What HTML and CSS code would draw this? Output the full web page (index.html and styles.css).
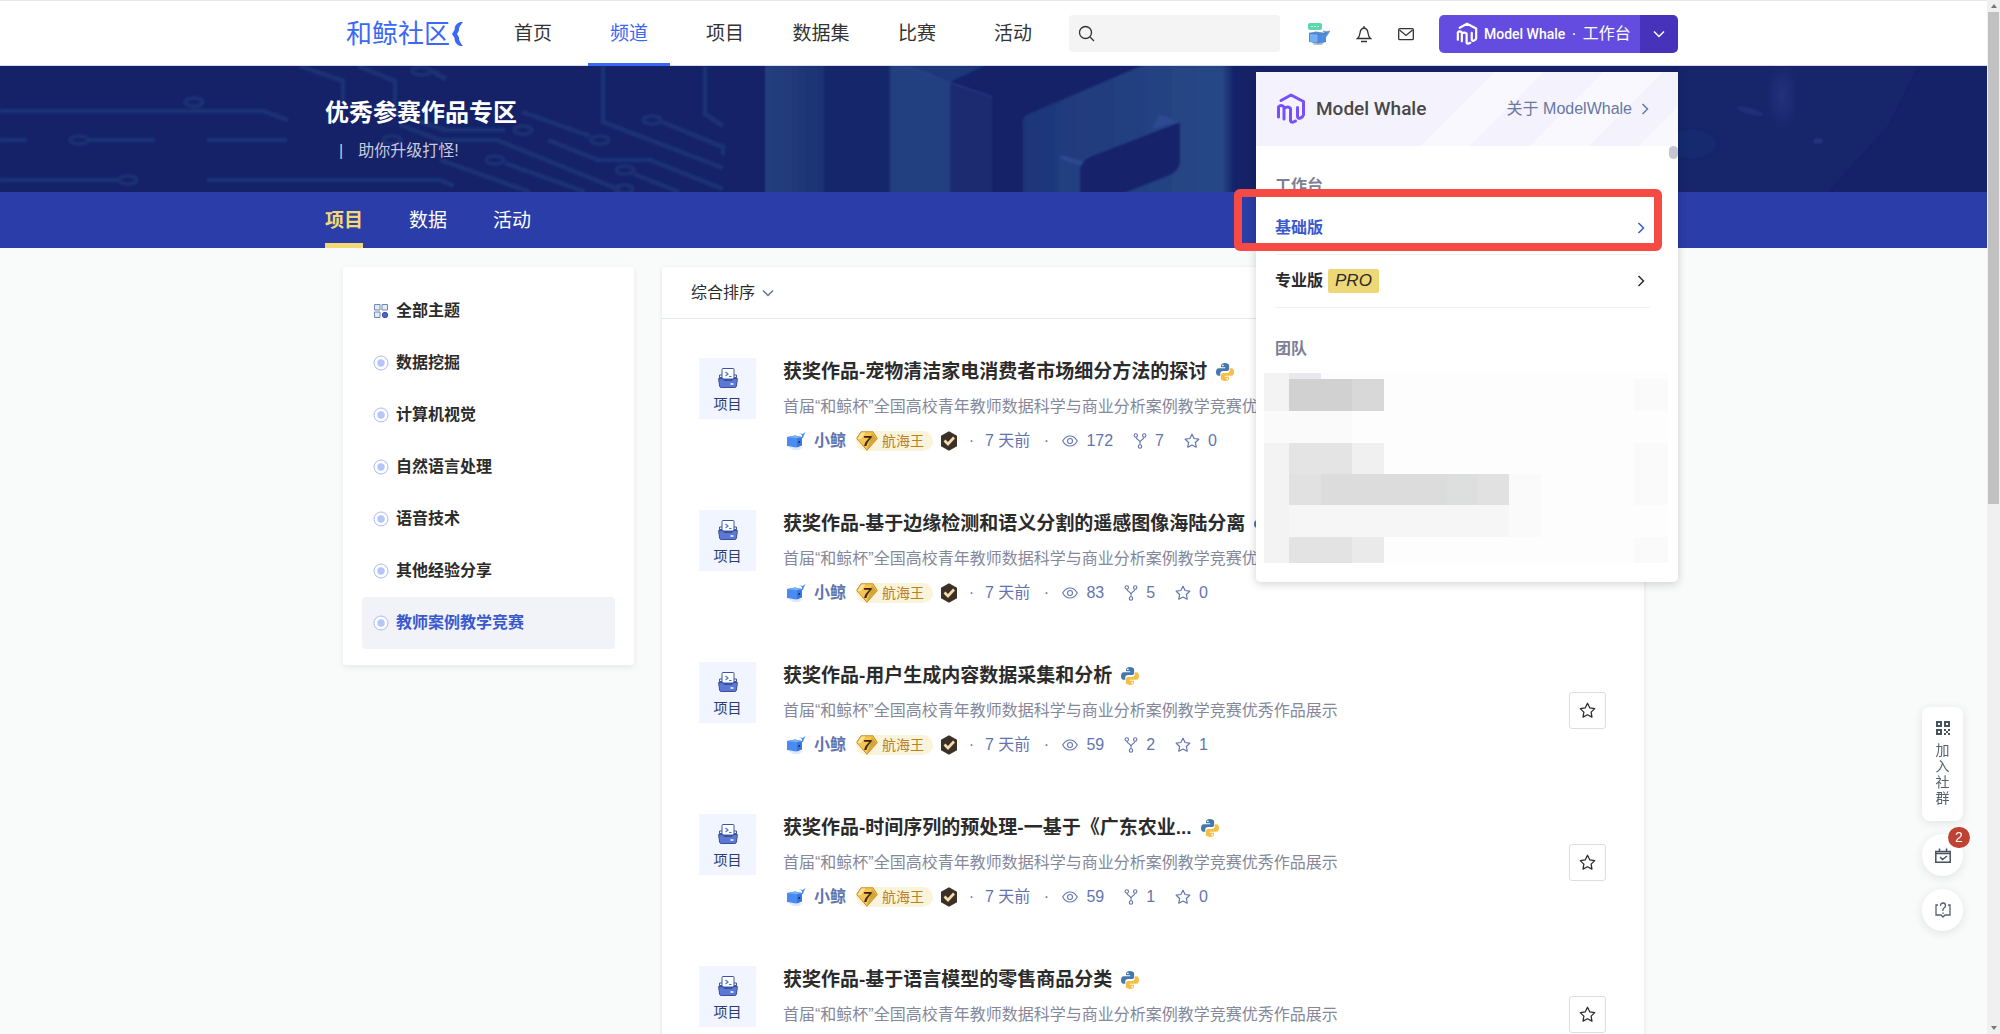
FILE: index.html
```html
<!DOCTYPE html>
<html lang="zh-CN">
<head>
<meta charset="utf-8">
<meta name="viewport" content="width=device-width, initial-scale=1">
<title>优秀参赛作品专区 - 和鲸社区</title>
<link rel="stylesheet" href="styles.css">
</head>
<body>
<svg class="sprite" aria-hidden="true">
  <symbol id="python" viewBox="0 0 20 20">
    <path fill="#4478ae" d="M9.800 0C6.900 0 5.600 1 5.600 2.800v2h4.600v.9H3.100C1.100 5.700 0 7.300 0 10s1.100 4.300 2.900 4.300h1.800v-2.300c0-1.700 1.300-3 3-3h4.300c1.500 0 2.600-1.200 2.600-2.700V2.800C14.600 1 12.800 0 9.800 0zM7.600 1.600a.9.9 0 1 1 0 1.900.9.9 0 0 1 0-1.900z"/>
    <path fill="#f5be45" d="M10.200 20c2.900 0 4.200-1 4.200-2.800v-2H9.800v-.9h7.100c2 0 3.100-1.600 3.100-4.300s-1.100-4.300-2.900-4.300h-1.800V8c0 1.700-1.300 3-3 3H8c-1.500 0-2.600 1.200-2.600 2.700v3.500C5.400 19 7.200 20 10.200 20zm2.200-1.600a.9.9 0 1 1 0-1.900.9.9 0 0 1 0 1.900z"/>
  </symbol>
  <symbol id="project" viewBox="0 0 20 20">
    <path fill="#3f57ab" d="M1 9h18l-1.500 10h-15z"/><path fill="none" stroke="#3f5598" d="M1.500 9V7H4M18.500 9V7H16"/>
    <path fill="#fff" stroke="#3f5598" d="M4 11V1.500Q4 .5 5 .5h10q1 0 1 1V11z"/>
    <path fill="#5b78d6" stroke="#3b4d96" d="M.6 10.500h4l1.500 2h7.800l1.500-2h4l-1 7.500q-.2 1.500-1.600 1.500H3.200q-1.400 0-1.600-1.500z"/>
    <path fill="none" stroke="#4b6fe0" stroke-width="1.200" d="M7.500 4l2.500 2-2.500 2M11 8.500h2.500"/><path stroke="#fff" stroke-width="1.500" d="M12.500 16h3"/>
  </symbol>
  <symbol id="avatar" viewBox="0 0 20 20">
    <path fill="#dcebfb" d="M3 16h14l-4 3H7z"/><path fill="#4a8bf2" d="M1 6l8-1.500 7 1.500v8l-6 2.500L1 15z"/><path fill="#75aef8" d="M1 6l8-1.500L16 6l-5 1.500z"/><path fill="#3b76dd" d="M11 7.500L16 6v8.500l-5 2z"/>
    <path fill="#4a8bf2" d="M15 7c1-1 1-2 1-3l-2.500-1.500 3 .5L19.500 1 18 4c-.5 2-1 3-3 4z"/><path fill="#1b2d60" d="M12.500 10h1.500v2h-1.500z"/>
  </symbol>
  <symbol id="diamond" viewBox="0 0 22 20">
    <path fill="#f4c651" stroke="#c68e26" d="M5 .8h12l4.300 6.700L11 19.300.7 7.500z"/><path fill="#fbe39a" d="M5.500 1.500h4L5 8H1.500z"/><path fill="#dba335" d="M16 2l4.500 5.500L11 18.500z"/>
  </symbol>
  <symbol id="verified" viewBox="0 0 18 20">
    <path fill="#3c3127" d="M9 .3l8 4.400v10.600l-8 4.400-8-4.400V4.700z"/><path fill="none" stroke="#f6dcae" stroke-width="2.600" d="M4.500 9.500l3.500 3.500 6-6.500"/>
  </symbol>
  <symbol id="eye" viewBox="0 0 16 16"><g fill="none" stroke="currentColor" stroke-width="1.100"><path d="M.7 8C2.500 4.700 5 3 8 3s5.500 1.700 7.300 5C13.500 11.300 11 13 8 13S2.500 11.300.7 8z"/><circle cx="8" cy="8" r="2.500"/></g></symbol>
  <symbol id="fork" viewBox="0 0 14 16"><g fill="none" stroke="currentColor" stroke-width="1.100"><circle cx="2.800" cy="2.500" r="1.700"/><circle cx="11.200" cy="2.500" r="1.700"/><circle cx="7" cy="13.500" r="1.700"/><path d="M3 4.200c0 2.500 4 2.500 4 5v2.600M11 4.200c0 2.500-4 2.500-4 5"/></g></symbol>
  <symbol id="star" viewBox="0 0 16 16"><path fill="none" stroke="currentColor" stroke-width="1.200" stroke-linejoin="round" d="M8 1.200l2.100 4.300 4.700.7-3.400 3.300.8 4.700L8 12l-4.200 2.200.8-4.700L1.200 6.200l4.700-.7z"/></symbol>
  <symbol id="mw" viewBox="0 0 30 32">
    <g fill="none" stroke="currentColor" stroke-width="3" stroke-linecap="round" stroke-linejoin="round"><path d="M5 7.500L15 2l12.500 6.500v13.500q-.5 2-3 3-3 1-3-2V14.500M2.500 24V14q2.500-3 5.500 0v12M8 15.500q4-3 6.500 0V28q1 2.500 5 0"/></g>
  </symbol>
  <symbol id="right" viewBox="0 0 8 12"><path fill="none" stroke="currentColor" stroke-width="1.500" d="M1.500 1l5 5-5 5"/></symbol>
  <symbol id="down" viewBox="0 0 12 8"><path fill="none" stroke="currentColor" stroke-width="1.500" d="M1 1.500l5 5 5-5"/></symbol>
  <symbol id="dot" viewBox="0 0 16 16"><circle cx="8" cy="8" r="7" fill="#fff" stroke="#a9b9f0"/><circle cx="8" cy="8" r="3.700" fill="#b5c5f7"/></symbol>
</svg>

<div class="page">
<header class="header">
  <div class="header-inner">
    <a class="logo" href="#">和鲸社区
      <svg width="12" height="26" viewBox="0 0 12 26"><path fill="#3a68f9" d="M11 1H8Q2.500 3 2.500 9L0 13l2.500 4q0 6 5.500 8h3Q6.500 20 7 16.500L5 13l2-3.500Q6.500 6 11 1z"/></svg></a>
    <nav class="nav">
      <a href="#">首页</a><a class="active" href="#">频道</a><a href="#">项目</a><a href="#">数据集</a><a href="#">比赛</a><a href="#">活动</a>
    </nav>
    <label class="search">
      <svg width="17" height="17" viewBox="0 0 17 17"><g fill="none" stroke="#333" stroke-width="1.300"><circle cx="7.500" cy="7.500" r="6"/><path d="M12 12l4 4"/></g></svg>
      <input type="text" aria-label="搜索">
    </label>
    <div class="tools">
      <a href="#" aria-label="签到"><svg width="22" height="22" viewBox="0 0 22 22"><path fill="#b9c0cb" d="M3 18h14l-3 4H6z"/><path fill="#4c8de2" d="M1 10l7-1.500 10 1.500v9l-7 1.500L1 19z"/><path fill="#72aef2" d="M2 11h8v8H2z"/><path fill="#4c8de2" stroke="#7a8899" stroke-width=".5" d="M17 14l1-3-3-3 3.500.5L22 8l-2 3-2 3z"/><path fill="none" stroke="#65748c" stroke-width=".6" d="M1 10l9 1.500 8-1.500M10 11.500v9"/><rect width="14" height="7" rx="2" fill="#5ed6ab"/><path stroke="#c9f5e5" stroke-dasharray="2 1" d="M3 3.500h8"/></svg></a>
      <a href="#" aria-label="通知"><svg width="16" height="18" viewBox="0 0 16 18"><g fill="none" stroke="#333" stroke-width="1.300"><path d="M1.500 13.500h13Q12.500 12 12 8 11.500 3.500 8 3 4.500 3.500 4 8q-.5 4-2.500 5.500zM8 3V1M5 16.500h6"/></g></svg></a>
      <a href="#" aria-label="私信"><svg width="16" height="14" viewBox="0 0 16 14"><g fill="none" stroke="#333" stroke-width="1.300"><rect x=".7" y="1.700" width="14.600" height="11" rx="1"/><path d="M1.500 3L8 8.500 14.500 3"/></g></svg></a>
    </div>
    <div class="workbench">
      <div class="split">
        <button class="split-main" type="button"><svg width="22" height="24"><use href="#mw"/></svg><span class="brand">Model Whale</span><span>·</span><span>工作台</span></button>
        <button class="split-more" type="button" aria-label="展开"><svg width="12" height="8"><use href="#down"/></svg></button>
      </div>
      <section class="menu">
        <div class="menu-head">
          <svg class="mw-logo" width="30" height="32"><use href="#mw"/></svg><span class="brand">Model Whale</span>
          <a href="#">关于 ModelWhale <svg width="8" height="12"><use href="#right"/></svg></a>
        </div>
        <div class="menu-body">
          <h3>工作台</h3>
          <a class="row current" href="#"><span>基础版</span><svg width="8" height="12"><use href="#right"/></svg></a>
          <a class="row" href="#"><span>专业版<em>PRO</em></span><svg width="8" height="12"><use href="#right"/></svg></a>
          <h3 class="team">团队</h3>
          <svg class="mosaic" viewBox="0 0 404 190" width="404" height="190">
            <path fill="#fdfdfd" d="M0 0h404v190H0z"/>
            <path fill="#f3f3f3" d="M0 0h25v38H0zM0 70h25v120H0z"/><path fill="#fafafa" d="M0 38h88v32H0zM370 6h34v32h-34zM370 70h34v62h-34zM370 164h34v26h-34z"/>
            <path fill="#e8e9ec" d="M25 0h32v6H25z"/><path fill="#d1d1d1" d="M25 6h63v32H25z"/><path fill="#d8d8d8" d="M88 6h32v32H88z"/>
            <path fill="#e4e4e4" d="M25 70h63v31H25z"/><path fill="#f0f0f0" d="M88 70h32v31H88z"/>
            <path fill="#e1e1e1" d="M25 101h220v31H25z"/><path fill="#dcdcdc" d="M57 101h126v31H57z"/><path fill="#dddfde" d="M183 101h31v31h-31z"/>
            <path fill="#fafafa" d="M245 101h32v63h-32z"/><path fill="#f6f6f6" d="M25 132h220v32H25z"/>
            <path fill="#e3e3e3" d="M25 164h63v26H25z"/><path fill="#eaeaea" d="M88 164h32v26H88z"/>
          </svg>
        </div>
        <span class="menu-thumb"></span>
        <span class="marker"></span>
      </section>
    </div>
  </div>
</header>

<section class="banner">
  <svg class="banner-art" viewBox="0 66 1987 126" preserveAspectRatio="xMidYMid slice" aria-hidden="true">
    <defs>
      <linearGradient id="g1"><stop offset="0" stop-color="#23407f"/><stop offset="1" stop-color="#1d3272"/></linearGradient>
      <linearGradient id="g2"><stop offset="0" stop-color="#1e3779"/><stop offset="1" stop-color="#274886"/></linearGradient>
      <linearGradient id="g3"><stop offset="0" stop-color="#274886"/><stop offset="1" stop-color="#152268"/></linearGradient>
      <radialGradient id="g4"><stop offset="0" stop-color="#22327b"/><stop offset="1" stop-color="#22327b" stop-opacity="0"/></radialGradient>
      <filter id="soft"><feGaussianBlur stdDeviation=".9"/></filter>
    </defs>
    <path fill="#152268" d="M0 66h1987v126H0z"/>
    <g fill="none" stroke="#1b3173" stroke-width="5" filter="url(#soft)">
      <path d="M0 111h263l25 9M0 140h27M88 140h67M207 140h80M0 180h118M207 180h233l14 6M300 66l43 15v24M358 66l37 15v32l50 17h60M400 125l40 15h57l123 50M430 70l16 9M522 112l68 24M548 140l50 20h52l73 29M603 66v56l120 46M705 66v48l18 12M662 122l61 25v8M505 163l80 29M440 160l90 32M634 174l45 18"/>
      <g stroke-width="3.500"><ellipse cx="194" cy="102" rx="9" ry="4"/><ellipse cx="79" cy="140" rx="9" ry="4"/><ellipse cx="128" cy="180" rx="9" ry="4"/><ellipse cx="421" cy="71" rx="9" ry="4"/><ellipse cx="523" cy="130" rx="9" ry="4"/><ellipse cx="600" cy="140" rx="9" ry="4"/><ellipse cx="652" cy="120" rx="9" ry="4"/><ellipse cx="495" cy="160" rx="9" ry="4"/><ellipse cx="625" cy="170" rx="9" ry="4"/><ellipse cx="392" cy="140" rx="9" ry="4"/><ellipse cx="624" cy="189" rx="9" ry="4"/></g>
    </g>
    <g filter="url(#soft)">
      <path fill="url(#g1)" d="M765 60h59v140h-59z"/><path fill="#18266b" d="M824 60h66v140h-66z"/>
      <path fill="#234080" d="M890 60h60v140h-60z"/><path fill="#1f387a" d="M900 60h96l-46 22z"/><path fill="#1a2a6f" d="M950 82l42 14v104h-42z"/>
      <path fill="none" stroke="#2c4288" d="M905 67l87 30"/>
      <path fill="url(#g2)" d="M1023 200v-78q0-6 8-9l124-53h68v140z"/><path fill="url(#g3)" d="M1221 60h14v140h-14z"/>
      <path fill="#21407f" d="M1059 158l21 8v34h-21z"/>
      <path fill="#142069" d="M1080 200v-30q0-8 10-13l90-35v38q0 10-10 15l-64 25z"/><path fill="#2d4a91" d="M1152 129l7-15 21 8zM1059 158l3-3 22 7-4 4z"/>
    </g>
    <path fill="#1a2970" d="M1678 66h240l-30 60-60 66h-150z" opacity=".4" filter="url(#soft)"/>
    <ellipse cx="1782" cy="96" rx="16" ry="34" fill="url(#g4)"/><ellipse cx="1750" cy="111" rx="14" ry="3" fill="#2b3c85" opacity=".5" transform="rotate(16 1750 111)" filter="url(#soft)"/>
    <ellipse cx="1818" cy="141" rx="5" ry="3" fill="#24347c" filter="url(#soft)"/><ellipse cx="1692" cy="144" rx="24" ry="14" fill="#192a70" filter="url(#soft)"/>
  </svg>
  <div class="banner-inner">
    <h1>优秀参赛作品专区</h1>
    <p><span>|</span>助你升级打怪!</p>
  </div>
</section>
<nav class="tabs"><div class="tabs-inner"><a class="active" href="#">项目</a><a href="#">数据</a><a href="#">活动</a></div></nav>

<main class="content">
  <aside class="topics">
    <a href="#"><svg width="16" height="16" viewBox="0 0 16 16"><g fill="#e4ebfa" stroke="#7387ad"><path d="M1.500 1.500h5.500v5.500H1.500zM9 1.500h5.500v5.500H9zM1.500 9h5.500v5.500H1.500z"/><circle cx="12" cy="12" r="2.700" fill="#4c66c8" stroke="#3d51a2"/></g></svg>全部主题</a>
    <a href="#"><svg width="16" height="16"><use href="#dot"/></svg>数据挖掘</a>
    <a href="#"><svg width="16" height="16"><use href="#dot"/></svg>计算机视觉</a>
    <a href="#"><svg width="16" height="16"><use href="#dot"/></svg>自然语言处理</a>
    <a href="#"><svg width="16" height="16"><use href="#dot"/></svg>语音技术</a>
    <a href="#"><svg width="16" height="16"><use href="#dot"/></svg>其他经验分享</a>
    <a class="active" href="#"><svg width="16" height="16"><use href="#dot"/></svg>教师案例教学竞赛</a>
  </aside>
  <section class="card">
    <div class="sort"><button type="button">综合排序<svg width="12" height="8"><use href="#down"/></svg></button></div>
    <div class="list">
      <article class="item">
        <div class="tile"><svg width="20" height="20"><use href="#project"/></svg>项目</div>
        <div class="info">
          <h2><a href="#">获奖作品-宠物清洁家电消费者市场细分方法的探讨</a><svg width="18" height="20"><use href="#python"/></svg></h2>
          <p>首届“和鲸杯”全国高校青年教师数据科学与商业分析案例教学竞赛优秀作品展示</p>
          <div class="meta"><svg width="20" height="20"><use href="#avatar"/></svg><b>小鲸</b><span class="level"><i><svg width="22" height="20"><use href="#diamond"/></svg><em>7</em></i>航海王</span><svg class="verified" width="18" height="20"><use href="#verified"/></svg><span class="sep">·</span><time>7 天前</time><span class="sep wide">·</span><span class="stat"><svg width="16" height="16"><use href="#eye"/></svg>172</span><span class="stat"><svg width="14" height="16"><use href="#fork"/></svg>7</span><span class="stat"><svg width="16" height="16"><use href="#star"/></svg>0</span></div>
        </div>
        <button class="fav" type="button" aria-label="收藏"><svg width="17" height="17"><use href="#star"/></svg></button>
      </article>
      <article class="item">
        <div class="tile"><svg width="20" height="20"><use href="#project"/></svg>项目</div>
        <div class="info">
          <h2><a href="#">获奖作品-基于边缘检测和语义分割的遥感图像海陆分离</a><svg width="18" height="20"><use href="#python"/></svg></h2>
          <p>首届“和鲸杯”全国高校青年教师数据科学与商业分析案例教学竞赛优秀作品展示</p>
          <div class="meta"><svg width="20" height="20"><use href="#avatar"/></svg><b>小鲸</b><span class="level"><i><svg width="22" height="20"><use href="#diamond"/></svg><em>7</em></i>航海王</span><svg class="verified" width="18" height="20"><use href="#verified"/></svg><span class="sep">·</span><time>7 天前</time><span class="sep wide">·</span><span class="stat"><svg width="16" height="16"><use href="#eye"/></svg>83</span><span class="stat"><svg width="14" height="16"><use href="#fork"/></svg>5</span><span class="stat"><svg width="16" height="16"><use href="#star"/></svg>0</span></div>
        </div>
        <button class="fav" type="button" aria-label="收藏"><svg width="17" height="17"><use href="#star"/></svg></button>
      </article>
      <article class="item">
        <div class="tile"><svg width="20" height="20"><use href="#project"/></svg>项目</div>
        <div class="info">
          <h2><a href="#">获奖作品-用户生成内容数据采集和分析</a><svg width="18" height="20"><use href="#python"/></svg></h2>
          <p>首届“和鲸杯”全国高校青年教师数据科学与商业分析案例教学竞赛优秀作品展示</p>
          <div class="meta"><svg width="20" height="20"><use href="#avatar"/></svg><b>小鲸</b><span class="level"><i><svg width="22" height="20"><use href="#diamond"/></svg><em>7</em></i>航海王</span><svg class="verified" width="18" height="20"><use href="#verified"/></svg><span class="sep">·</span><time>7 天前</time><span class="sep wide">·</span><span class="stat"><svg width="16" height="16"><use href="#eye"/></svg>59</span><span class="stat"><svg width="14" height="16"><use href="#fork"/></svg>2</span><span class="stat"><svg width="16" height="16"><use href="#star"/></svg>1</span></div>
        </div>
        <button class="fav" type="button" aria-label="收藏"><svg width="17" height="17"><use href="#star"/></svg></button>
      </article>
      <article class="item">
        <div class="tile"><svg width="20" height="20"><use href="#project"/></svg>项目</div>
        <div class="info">
          <h2><a href="#">获奖作品-时间序列的预处理-一基于《广东农业...</a><svg width="18" height="20"><use href="#python"/></svg></h2>
          <p>首届“和鲸杯”全国高校青年教师数据科学与商业分析案例教学竞赛优秀作品展示</p>
          <div class="meta"><svg width="20" height="20"><use href="#avatar"/></svg><b>小鲸</b><span class="level"><i><svg width="22" height="20"><use href="#diamond"/></svg><em>7</em></i>航海王</span><svg class="verified" width="18" height="20"><use href="#verified"/></svg><span class="sep">·</span><time>7 天前</time><span class="sep wide">·</span><span class="stat"><svg width="16" height="16"><use href="#eye"/></svg>59</span><span class="stat"><svg width="14" height="16"><use href="#fork"/></svg>1</span><span class="stat"><svg width="16" height="16"><use href="#star"/></svg>0</span></div>
        </div>
        <button class="fav" type="button" aria-label="收藏"><svg width="17" height="17"><use href="#star"/></svg></button>
      </article>
      <article class="item">
        <div class="tile"><svg width="20" height="20"><use href="#project"/></svg>项目</div>
        <div class="info">
          <h2><a href="#">获奖作品-基于语言模型的零售商品分类</a><svg width="18" height="20"><use href="#python"/></svg></h2>
          <p>首届“和鲸杯”全国高校青年教师数据科学与商业分析案例教学竞赛优秀作品展示</p>
        </div>
        <button class="fav" type="button" aria-label="收藏"><svg width="17" height="17"><use href="#star"/></svg></button>
      </article>
    </div>
  </section>
</main>
</div>

<div class="scrollbar" aria-hidden="true"><span class="arrow up"></span><span class="thumb"></span><span class="arrow down"></span></div>

<div class="float">
  <a class="join" href="#"><svg width="14" height="14" viewBox="0 0 14 14"><g fill="none" stroke="#45525f" stroke-width="2"><path d="M1 1h4v4H1zM9 1h4v4H9zM1 9h4v4H1z"/><path d="M8 9h2M12 9h2M10 11h2M8 13h2M12 13h2"/></g></svg><span>加入社群</span></a>
  <button type="button" aria-label="任务"><svg width="16" height="15" viewBox="0 0 16 15"><g fill="none" stroke="#45525f" stroke-width="1.500"><path d="M.8 3.500h14.400v10.700H.8zM4.500.5v3M11.500.5v3M.8 5.500h14.400M5 9l2.500 2.500L12 8"/></g></svg><span class="count">2</span></button>
  <button type="button" aria-label="帮助"><svg width="16" height="16" viewBox="0 0 16 16"><g fill="none" stroke="#55606d" stroke-width="1.300"><path d="M3 3H1v10h5l2 2 2-2h5V3h-2M5.500 4Q5.500 1 8 1t2.500 2.500Q10.500 5 9 6T8 9M8 10.500V12"/></g></svg></button>
</div>
</body>
</html>
```

FILE: styles.css
```css
* { box-sizing: border-box; }
html, body { height: 100%; }
body {
  margin: 0;
  overflow: hidden;
  display: flex;
  background: #f9fbfa;
  color: #2b2b2b;
  font: 16px/24px "Liberation Sans", "Noto Sans CJK SC", sans-serif;
}
a { color: inherit; text-decoration: none; }
button { border: 0; padding: 0; background: none; color: inherit; font: inherit; cursor: pointer; }
h1, h2, h3, p { margin: 0; }
svg { display: block; flex: none; }
.sprite { position: absolute; width: 0; height: 0; }
.page { flex: 1; min-width: 0; }

/* header */
.header { position: relative; z-index: 5; height: 66px; background: #fff; border-top: 1px solid #e8e8e8; border-bottom: 1px solid #d9dce6; }
.header-inner { display: flex; align-items: center; max-width: 1369px; height: 65px; margin: 0 auto; padding-left: 37px; }
.logo { display: flex; align-items: center; gap: 2px; width: 146px; color: #3a68f9; font-size: 26px; white-space: nowrap; }
.nav { display: flex; gap: 14px; align-self: stretch; font-size: 19px; color: #333; }
.nav a { width: 82px; padding-top: 21px; text-align: center; }
.nav .active { color: #3a68f9; border-bottom: 3px solid #3a68f9; }
.search { display: flex; align-items: center; width: 211px; height: 37px; margin-left: 15px; padding: 0 9px; border-radius: 4px; background: #f4f4f4; }
.search input { flex: 1; min-width: 0; border: 0; outline: 0; background: none; font: inherit; }
.tools { display: flex; align-items: center; gap: 26px; margin-left: 28px; }
.workbench { position: relative; margin-left: auto; }
.split { display: flex; height: 38px; border-radius: 5px; overflow: hidden; color: #fff; }
.split-main { display: flex; align-items: center; gap: 6px; width: 201px; padding-left: 17px; background: #654ce0; }
.split-more { display: grid; place-items: center; width: 38px; background: #4733bb; }
.brand { font-family: Roboto, sans-serif; font-weight: 500; font-size: 14px; white-space: nowrap; }

/* workbench menu */
.menu { position: absolute; top: 57px; right: 0; width: 422px; border-radius: 0 0 5px 5px; background: #fff; box-shadow: 0 2px 10px rgba(0, 0, 0, .18); }
.menu-head { display: flex; align-items: center; gap: 10px; height: 74px; padding: 0 29px 0 20px; background: linear-gradient(135deg, #f4f2fd 48%, #f9f8fe 48%, #f9f8fe 58%, #f4f2fd 58%, #f4f2fd 70%, #f9f8fe 70%, #f9f8fe 82%, #f4f2fd 82%, #f4f2fd 92%, #f9f8fe 92%); }
.menu-head .brand { font-size: 19px; color: #484848; }
.mw-logo { color: #7650fa; }
.menu-head a { display: flex; align-items: center; gap: 9px; margin-left: auto; color: #6678a3; }
.menu-body { padding: 28px 28px 19px 19px; }
.menu h3 { margin-bottom: 4px; font-size: 16px; line-height: 24px; color: #7c8092; }
.menu .team { margin: 29px 0 12px; }
.row { display: flex; align-items: center; justify-content: space-between; height: 53px; padding-right: 5px; border-bottom: 1px solid #eff0f2; font-weight: 700; }
.row.current { color: #3a59cf; }
.row em { display: inline-block; margin-left: 5px; padding: 0 7px; border-radius: 2px; background: #eed777; font-size: 17px; font-weight: 400; }
.mosaic { margin-left: -11px; }
.menu-thumb { position: absolute; top: 74px; right: 0; width: 9px; height: 13px; border-radius: 5px; background: #c5c6cf; }
.marker { position: absolute; top: 117px; left: -22px; width: 428px; height: 62px; border: 8px solid #f64a45; border-radius: 6px; pointer-events: none; }

/* banner */
.banner { position: relative; height: 126px; background: #152268; color: #fff; }
.banner-art { position: absolute; width: 100%; height: 100%; }
.banner-inner { position: relative; max-width: 1337px; margin: 0 auto; padding-top: 31px; }
.banner h1 { font-size: 24px; line-height: 32px; }
.banner p { display: flex; gap: 15px; margin-top: 10px; padding-left: 14px; color: #c6cade; }
.tabs { height: 56px; background: #2a3da8; color: #fff; font-size: 19px; }
.tabs-inner { display: flex; gap: 46px; max-width: 1337px; height: 100%; margin: 0 auto; }
.tabs a { padding-top: 17px; }
.tabs .active { color: #f3d973; font-weight: 700; border-bottom: 5px solid #f3d973; }

/* content */
.content { display: grid; grid-template-columns: 291px 1fr; gap: 28px; align-items: start; max-width: 1301px; margin: 19px auto 0; }
.topics { padding: 18px 19px 16px; border-radius: 3px; background: #fff; box-shadow: 0 2px 6px rgba(0, 0, 0, .08); font-weight: 700; }
.topics a { display: flex; align-items: center; gap: 7px; height: 52px; padding-left: 11px; border-radius: 4px; }
.topics .active { background: #f2f3f9; color: #3a59cf; }
.card { background: #fff; box-shadow: 0 1px 4px rgba(0, 0, 0, .1); }
.sort { display: flex; align-items: center; height: 52px; padding-left: 29px; border-bottom: 1px solid #e6e7ea; }
.sort button { display: flex; align-items: center; gap: 7px; }
.sort svg { color: #69718c; }
.list { padding-top: 39px; }
.item { display: flex; height: 152px; padding: 0 38px 0 37px; }
.tile { display: flex; flex-direction: column; align-items: center; gap: 4px; width: 57px; height: 61px; padding-top: 10px; background: #f0f5ff; color: #2c3a73; font-size: 14px; }
.info { flex: 1; min-width: 0; margin-left: 27px; }
.info h2 { display: flex; align-items: center; gap: 9px; font-size: 19px; line-height: 28px; white-space: nowrap; }
.info p { margin-top: 9px; color: #85889a; white-space: nowrap; }
.meta { display: flex; align-items: center; height: 20px; margin-top: 12px; padding-left: 3px; color: #6375ae; white-space: nowrap; }
.meta b { margin: 0 10px 0 8px; }
.level { display: flex; align-items: center; height: 20px; padding-right: 9px; border-radius: 10px; background: #fbf4dc; color: #b68127; font-size: 14px; }
.level i { display: grid; place-items: center; margin-right: 4px; font-style: normal; }
.level i > * { grid-area: 1 / 1; }
.level em { color: #33271a; font-size: 15px; line-height: 16px; font-weight: 700; }
.verified { margin-left: 7px; }
.sep { width: 27px; text-align: center; }
.sep.wide { width: 32px; }
.stat { display: flex; align-items: center; gap: 8px; margin-right: 20px; }
.fav { display: grid; place-items: center; width: 37px; height: 37px; margin-top: 30px; border: 1px solid #dcdde2; border-radius: 3px; }

/* floating tools */
.float { position: fixed; right: 37px; bottom: 103px; display: flex; flex-direction: column; gap: 13px; color: #55606d; }
.join, .float button { position: relative; display: grid; place-items: center; width: 41px; height: 42px; border-radius: 21px; background: #fff; box-shadow: 0 2px 10px rgba(40, 50, 90, .12); }
.join { height: 114px; padding: 10px 0 12px; border-radius: 8px; }
.join span { width: 14px; font-size: 14px; line-height: 16px; }
.count { position: absolute; top: -7px; right: -7px; width: 22px; height: 21px; border-radius: 11px; background: #bf4232; color: #fff; font-size: 14px; line-height: 21px; }

/* scrollbar */
.scrollbar { display: flex; flex-direction: column; align-items: center; width: 13px; height: 100%; padding: 4px 0; background: #f0f0f0; }
.thumb { width: 11px; height: 48%; margin-top: 4px; background: #c1c1c1; }
.arrow { border: 3px solid transparent; border-top: 0; border-bottom: 4px solid #777; }
.arrow.down { margin-top: auto; border-bottom: 0; border-top: 4px solid #777; }
```
